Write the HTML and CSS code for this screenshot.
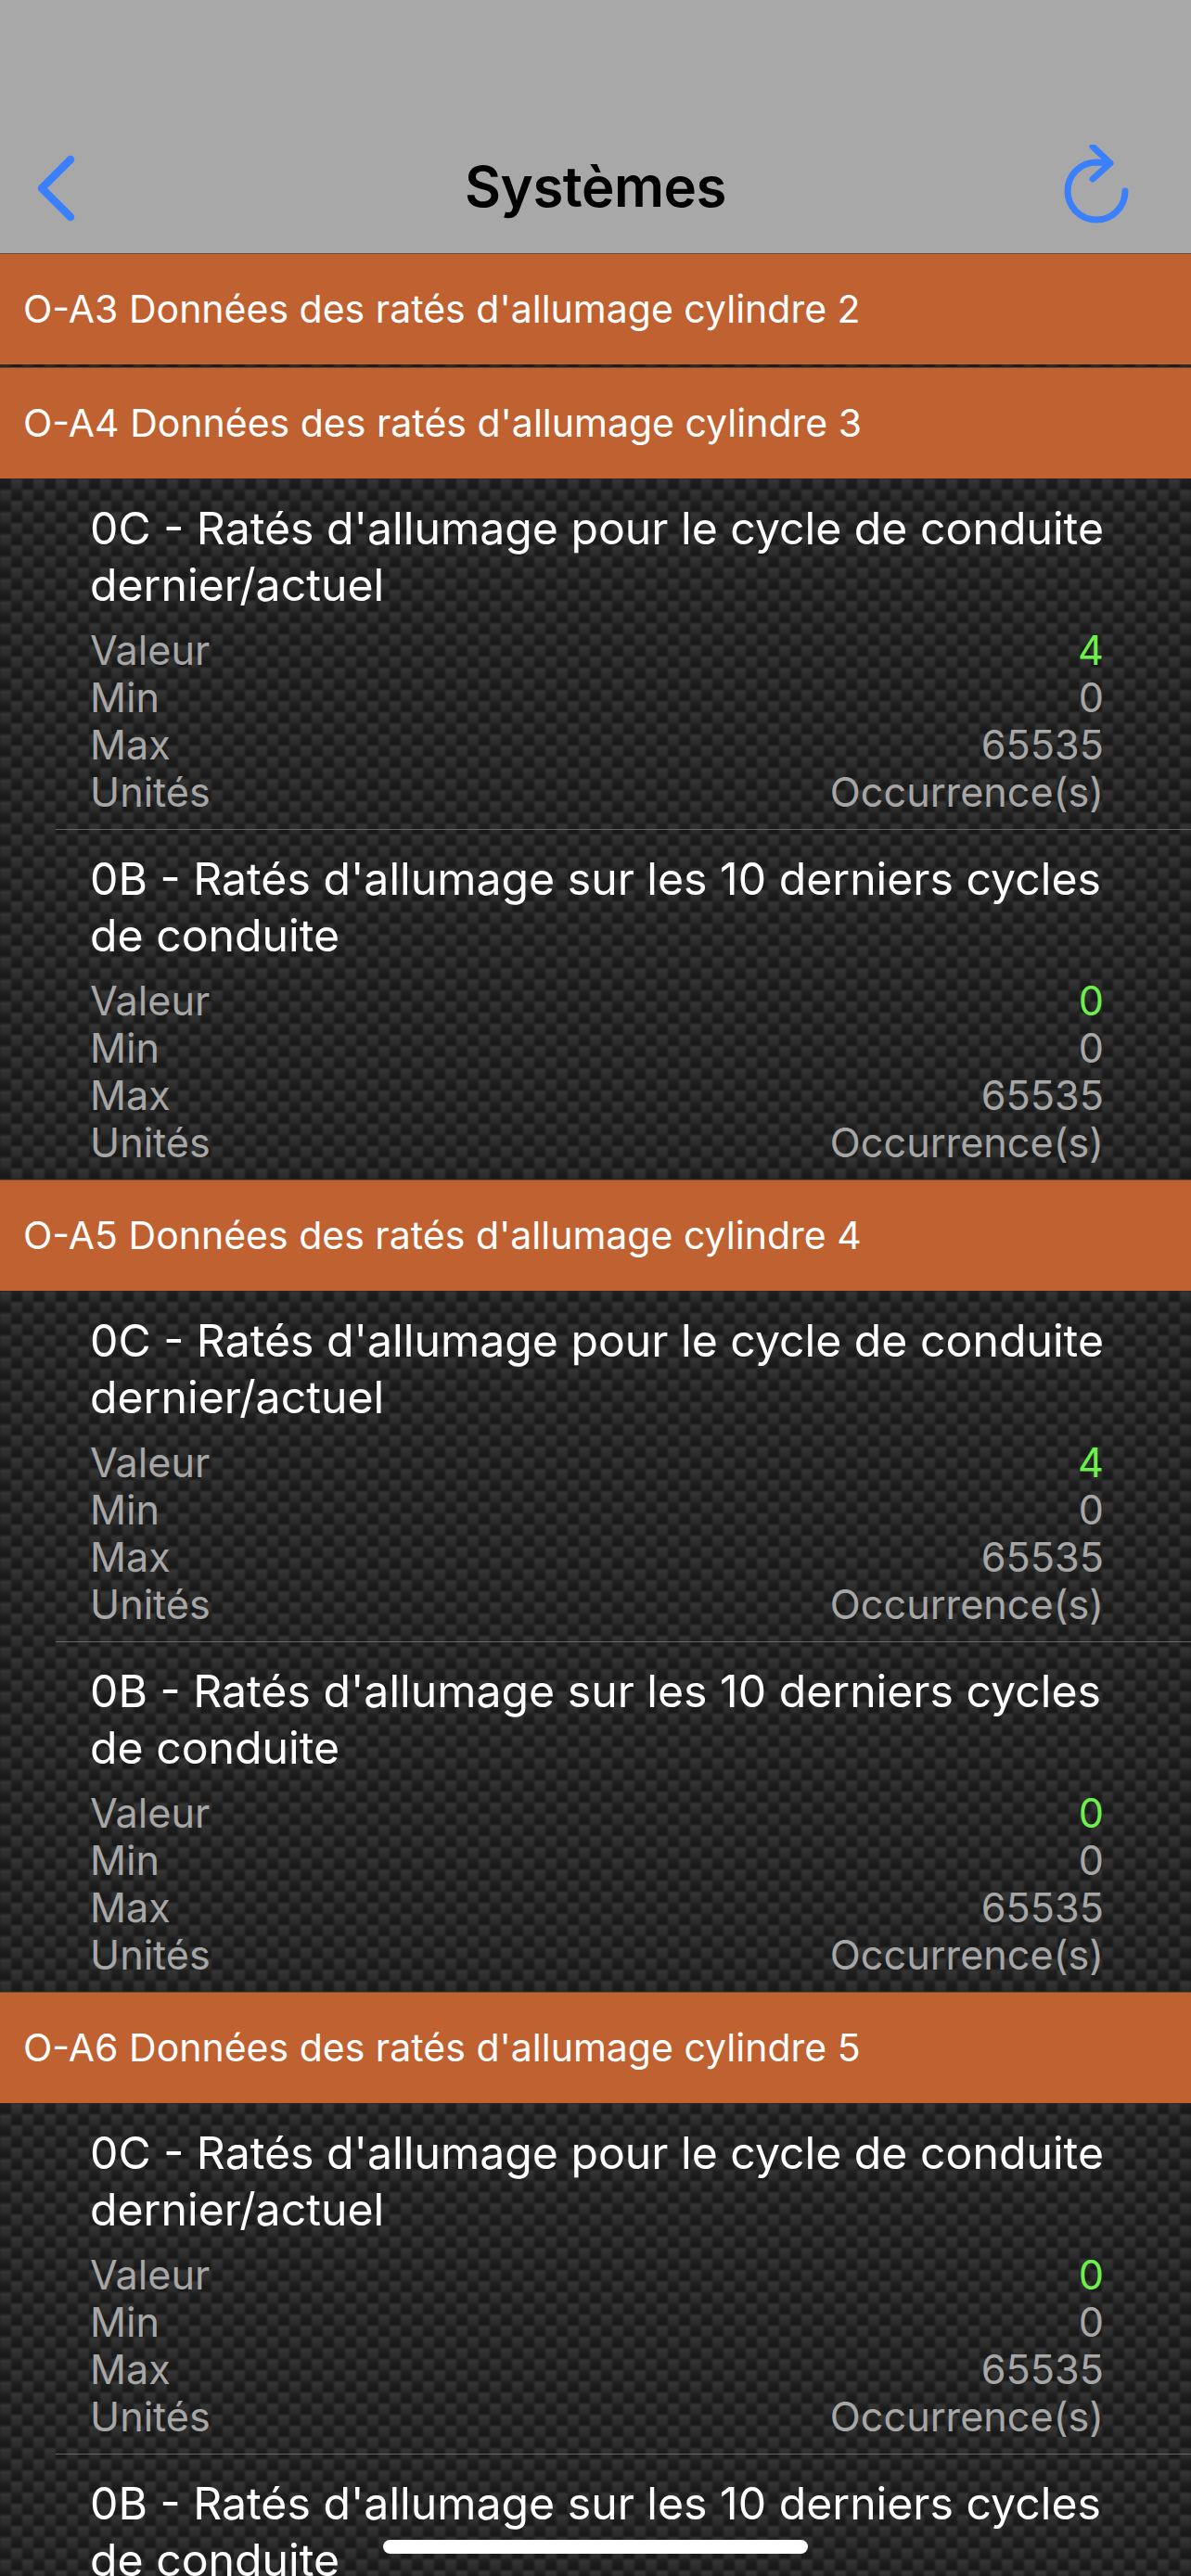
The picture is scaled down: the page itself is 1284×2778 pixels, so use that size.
FILE: index.html
```html
<!DOCTYPE html>
<html lang="fr">
<head>
<meta charset="utf-8">
<title>Systèmes</title>
<link rel="stylesheet" href="styles.css">
</head>
<body>
<div class="screen">
  <header class="navbar">
    <svg class="nav-icon" width="88" height="88" viewBox="0 0 88 88"><path d="M37 16 L6 47 L37 78" fill="none" stroke="#3a7ffb" stroke-width="8.5" stroke-linecap="round" stroke-linejoin="round"/></svg>
    <h1 class="nav-title">Systèmes</h1>
    <svg class="nav-icon" width="88" height="88" viewBox="0 0 88 88"><path d="M70 50 A31 31 0 1 1 39 19 L54 20 M35 2 L54 20 L35 37" fill="none" stroke="#3a7ffb" stroke-width="7" stroke-linecap="round" stroke-linejoin="round"/></svg>
  </header>
  <main class="list">
    <div class="section-head">O-A3 Données des ratés d'allumage cylindre 2</div>
    <div class="section-gap"></div>
    <div class="section-head">O-A4 Données des ratés d'allumage cylindre 3</div>
    <article class="item">
      <h2 class="item-title">0C - Ratés d'allumage pour le cycle de conduite dernier/actuel</h2>
      <div class="row"><span>Valeur</span><span class="value">4</span></div>
      <div class="row"><span>Min</span><span>0</span></div>
      <div class="row"><span>Max</span><span>65535</span></div>
      <div class="row"><span>Unités</span><span>Occurrence(s)</span></div>
    </article>
    <article class="item">
      <h2 class="item-title">0B - Ratés d'allumage sur les 10 derniers cycles de conduite</h2>
      <div class="row"><span>Valeur</span><span class="value">0</span></div>
      <div class="row"><span>Min</span><span>0</span></div>
      <div class="row"><span>Max</span><span>65535</span></div>
      <div class="row"><span>Unités</span><span>Occurrence(s)</span></div>
    </article>
    <div class="section-head">O-A5 Données des ratés d'allumage cylindre 4</div>
    <article class="item">
      <h2 class="item-title">0C - Ratés d'allumage pour le cycle de conduite dernier/actuel</h2>
      <div class="row"><span>Valeur</span><span class="value">4</span></div>
      <div class="row"><span>Min</span><span>0</span></div>
      <div class="row"><span>Max</span><span>65535</span></div>
      <div class="row"><span>Unités</span><span>Occurrence(s)</span></div>
    </article>
    <article class="item">
      <h2 class="item-title">0B - Ratés d'allumage sur les 10 derniers cycles de conduite</h2>
      <div class="row"><span>Valeur</span><span class="value">0</span></div>
      <div class="row"><span>Min</span><span>0</span></div>
      <div class="row"><span>Max</span><span>65535</span></div>
      <div class="row"><span>Unités</span><span>Occurrence(s)</span></div>
    </article>
    <div class="section-head">O-A6 Données des ratés d'allumage cylindre 5</div>
    <article class="item">
      <h2 class="item-title">0C - Ratés d'allumage pour le cycle de conduite dernier/actuel</h2>
      <div class="row"><span>Valeur</span><span class="value">0</span></div>
      <div class="row"><span>Min</span><span>0</span></div>
      <div class="row"><span>Max</span><span>65535</span></div>
      <div class="row"><span>Unités</span><span>Occurrence(s)</span></div>
    </article>
    <article class="item">
      <h2 class="item-title">0B - Ratés d'allumage sur les 10 derniers cycles de conduite</h2>
      <div class="row"><span>Valeur</span><span class="value">0</span></div>
      <div class="row"><span>Min</span><span>0</span></div>
      <div class="row"><span>Max</span><span>65535</span></div>
      <div class="row"><span>Unités</span><span>Occurrence(s)</span></div>
    </article>
  </main>
  <div class="home-indicator"></div>
</div>
</body>
</html>
```
FILE: styles.css
```css
* { box-sizing: border-box; }
html, body { margin: 0; padding: 0; }
body { width: 1284px; height: 2778px; overflow: hidden; font-family: Inter, "Liberation Sans", sans-serif; background: #1c1c1c; }
.screen { position: relative; width: 1284px; height: 2778px; overflow: hidden; }
.navbar {
  height: 273px;
  background: #a8a8a8;
  display: flex;
  align-items: flex-start;
  justify-content: space-between;
  padding: 156px 53px 0 39px;
}
.nav-icon { flex: none; display: block; }
.nav-title { margin: 8px 0 0 14px; font-size: 60px; font-weight: 600; line-height: 74px; color: #000; letter-spacing: -0.5px; }
.list {
  position: relative;
  isolation: isolate;
  overflow: hidden;
  background-color: #1f1f1f;
}
.list::before {
  content: "";
  position: absolute;
  inset: 0;
  z-index: -1;
  filter: blur(1.2px);
  background-image:
    linear-gradient(to bottom, rgba(255,255,255,.04), rgba(0,0,0,.1)),
    conic-gradient(#181818 25%, #2e2e2e 0 50%, #181818 0 75%, #2e2e2e 0);
  background-size: 12px 12px, 24px 24px;
  background-position: 0 3px, 0 15px;
}
.section-head {
  height: 120px;
  background: #bf6130;
  border-top: 1px solid #6e4a34;
  color: #fff;
  font-size: 41px;
  line-height: 118px;
  padding-left: 25px;
}
.section-gap { height: 3px; }
.item { height: 378px; padding: 24px 94px 0 97px; position: relative; }
.item + .item::before { content: ""; position: absolute; left: 60px; right: 0; top: 0; height: 1px; background: #666; }
.item-title { margin: 0 -10px 15px 0; font-size: 48.2px; font-weight: 400; line-height: 60.5px; color: #fff; }
.row { display: flex; justify-content: space-between; font-size: 43.2px; line-height: 51px; color: #a6a6a6; }
.value { color: #6cf04a; }
.home-indicator { position: absolute; left: 413px; top: 2739px; width: 458px; height: 15px; border-radius: 8px; background: #fff; }
```
